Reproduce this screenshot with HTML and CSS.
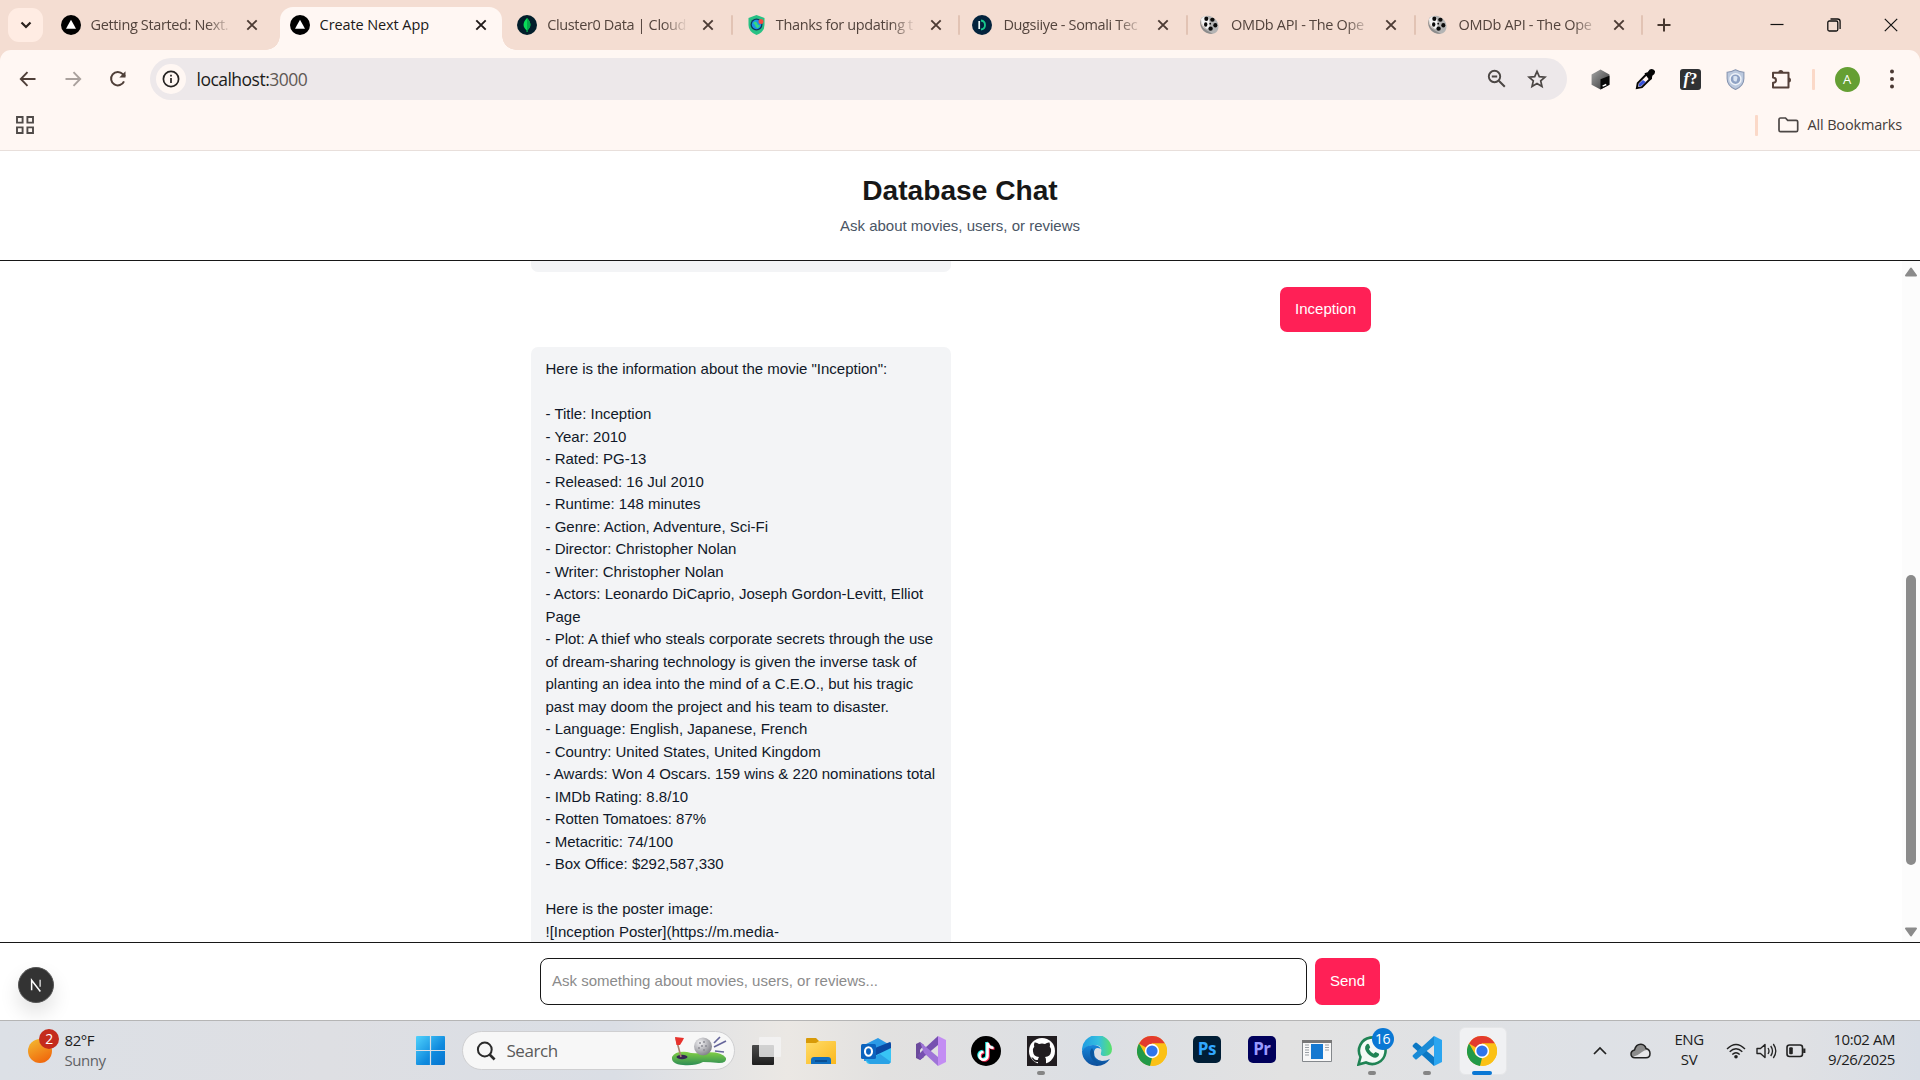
FILE: index.html
```html
<!DOCTYPE html>
<html lang="en">
<head>
<meta charset="utf-8">
<title>Create Next App</title>
<link rel="stylesheet" href="styles.css">
</head>
<body>
<svg class="sprite" aria-hidden="true">
  <defs>
    <linearGradient id="gCube" x1="0" y1="0" x2="1" y2="1"><stop offset="0" stop-color="#a5a5a5"/><stop offset=".7" stop-color="#555"/></linearGradient>
    <linearGradient id="gSun" x1="0.2" y1="0" x2="0.7" y2="1"><stop offset="0" stop-color="#f3b62f"/><stop offset="1" stop-color="#f0650b"/></linearGradient>
    <linearGradient id="gWin" gradientUnits="userSpaceOnUse" x1="0" y1="0" x2="29" y2="29"><stop offset="0" stop-color="#50d2fc"/><stop offset=".6" stop-color="#0f8ade"/><stop offset="1" stop-color="#0573cf"/></linearGradient>
    <linearGradient id="gFolder" x1="0" y1="0" x2="1" y2="1"><stop offset="0" stop-color="#ffdc69"/><stop offset="1" stop-color="#fbb81d"/></linearGradient>
    <linearGradient id="gEdge" x1="0" y1="0" x2="1" y2="0"><stop offset="0" stop-color="#1f9be2"/><stop offset=".55" stop-color="#35bfdf"/><stop offset="1" stop-color="#5be267"/></linearGradient>
    <linearGradient id="gEdgeLow" x1="0" y1="0" x2="0" y2="1"><stop offset="0" stop-color="#1788dc"/><stop offset="1" stop-color="#0d4e9b"/></linearGradient>
    <linearGradient id="gGrass" x1="0" y1="0" x2="0" y2="1"><stop offset="0" stop-color="#83cf45"/><stop offset="1" stop-color="#2d8d55"/></linearGradient>
    <linearGradient id="gDark" x1="0" y1="0" x2="0" y2="1"><stop offset="0" stop-color="#4b4b4b"/><stop offset="1" stop-color="#1e1e1e"/></linearGradient>
    <radialGradient id="gBall" cx=".35" cy=".3" r=".8"><stop offset="0" stop-color="#f2f2f4"/><stop offset="1" stop-color="#77777f"/></radialGradient>
  </defs>
  <symbol id="x" viewBox="0 0 20 20"><path d="M5.3 5.3l9.4 9.4M14.7 5.3l-9.4 9.4" stroke="currentColor" stroke-width="1.9" fill="none"/></symbol>
  <symbol id="vercel" viewBox="0 0 20 20"><circle cx="10" cy="10" r="10" fill="#000"/><path d="M10 4.8l5 9H5z" fill="#fff"/></symbol>
  <symbol id="reel" viewBox="0 0 20 20"><path d="M1 3Q5 0 10 1q8 3 8.500 10 0 6-4.500 7.500-5 1-9-5Q0 8 1 3z" fill="#b4b4b4"/><path d="M.5 4Q0 11 7 15.500l6 3.500q-8 0-11-5Q-1 9 .5 4z" fill="#8c8c8c"/><path d="M1 4q2-3 6-3 4 6 2 12l-2 1Q1 10 1 4z" fill="#f2f2f2"/><g fill="#0b0b0b"><ellipse cx="6.300" cy="3.800" rx="2" ry="2.200"/><ellipse cx="12.400" cy="4.800" rx="2.200" ry="2"/><ellipse cx="5.700" cy="9.500" rx="1.700" ry="2.300"/><ellipse cx="15.300" cy="10.300" rx="2" ry="2.200"/><ellipse cx="10.600" cy="13.700" rx="2.200" ry="2.100"/><circle cx="10.200" cy="8.700" r=".9"/></g></symbol>
  <symbol id="chrome" viewBox="0 0 30 30"><circle cx="15" cy="15" r="15" fill="#fbc116"/><path d="M15 15L2 7.5A15 15 0 0 1 28 7.5H15z" fill="#e33b2e"/><path d="M2 7.5l6.5 11.300L15 22l-2 8A15 15 0 0 1 2 7.500z" fill="#229a48"/><path d="M28 7.500H15l6.500 11.300L15 30A15 15 0 0 0 28 7.500z" fill="#fbc116"/><circle cx="15" cy="15" r="7.200" fill="#fff"/><circle cx="15" cy="15" r="5.600" fill="#2f75ea"/></symbol>
</svg>

<div class="browser">
  <div class="tabstrip">
    <button class="tab-search"><svg width="12" height="8" viewBox="0 0 12 8"><path d="M1.500 1.500L6 6l4.500-4.500" fill="none" stroke="#2a211d" stroke-width="2.200"/></svg></button>
    <div class="tabs">
      <div class="tab"><svg class="fav"><use href="#vercel"/></svg><span class="name">Getting Started: Next.</span><svg class="close"><use href="#x"/></svg></div>
      <div class="tab active"><svg class="fav"><use href="#vercel"/></svg><span class="name">Create Next App</span><svg class="close"><use href="#x"/></svg></div>
      <div class="tab sep"><svg class="fav" viewBox="0 0 20 20"><circle cx="10" cy="10" r="10" fill="#021e2b"/><path d="M10 3c4.500 4.500 4.500 9 .4 12.300V17h-.8v-1.700C5.500 12 5.500 7.500 10 3z" fill="#09dd59"/><path d="M10 3v14h.5v-1.700C14.500 12 14.500 7.500 10 3z" fill="#07a94b"/></svg><span class="name">Cluster0 Data | Cloud</span><svg class="close"><use href="#x"/></svg></div>
      <div class="tab sep"><svg class="fav" viewBox="0 0 20 20"><path d="M11.500 0l8 3v7q0 7-8 10-8-3-8-10V3z" fill="#27c184"/><circle cx="11.500" cy="9.500" r="6" fill="#0b385e"/><circle cx="11.500" cy="9.500" r="4.700" fill="#1d91ea"/><path d="M8 8q3-3 4 0t3 2q-1 4-3 3t-2-3z" fill="#35d981"/><circle cx="16" cy="6.500" r="2.500" fill="#f24d42"/></svg><span class="name shift">Thanks for updating t</span><svg class="close"><use href="#x"/></svg></div>
      <div class="tab sep"><svg class="fav" viewBox="0 0 20 20"><circle cx="10" cy="10" r="10" fill="#03233d"/><path d="M7.200 6v8" stroke="#e8f6f5" stroke-width="1.700"/><path d="M9 5.500q4 .5 4 4.500t-4 4.500" fill="none" stroke="#18c98c" stroke-width="1.800"/></svg><span class="name shift">Dugsiiye - Somali Tec</span><svg class="close"><use href="#x"/></svg></div>
      <div class="tab sep"><svg class="fav"><use href="#reel"/></svg><span class="name shift tight">OMDb API - The Ope</span><svg class="close"><use href="#x"/></svg></div>
      <div class="tab sep"><svg class="fav"><use href="#reel"/></svg><span class="name shift tight">OMDb API - The Ope</span><svg class="close"><use href="#x"/></svg></div>
    </div>
    <button class="newtab"><svg width="14" height="14" viewBox="0 0 14 14"><path d="M7 .5v13M.5 7h13" stroke="#47372f" stroke-width="2"/></svg></button>
    <div class="winctl">
      <button><svg width="14" height="14" viewBox="0 0 14 14"><path d="M.5 6.500h13" stroke="#111" stroke-width="1.200"/></svg></button>
      <button><svg width="14" height="14" viewBox="0 0 14 14"><rect x=".8" y="3" width="10" height="10" rx="1.500" fill="none" stroke="#111" stroke-width="1.300"/><path d="M3.500 1h7q2.600 0 2.600 2.600V11" fill="none" stroke="#111" stroke-width="1.300"/></svg></button>
      <button><svg width="14" height="14" viewBox="0 0 14 14"><path d="M.8.8l12.400 12.400M13.200.8L.8 13.200" stroke="#111" stroke-width="1.200"/></svg></button>
    </div>
  </div>

  <div class="panel">
    <div class="toolbar">
      <div class="nav">
        <svg viewBox="0 0 20 20"><path d="M17.500 10H3M9.500 3.200L2.800 10l6.700 6.800" fill="none" stroke="#4f3f38" stroke-width="1.900"/></svg>
        <svg viewBox="0 0 20 20"><path d="M2.500 10H17M10.500 3.200l6.700 6.800-6.700 6.800" fill="none" stroke="#aaa19d" stroke-width="1.900"/></svg>
        <svg viewBox="0 0 20 20"><path d="M16 12.300A6.700 6.700 0 1 1 14.800 5.200L17 7.500" fill="none" stroke="#4f3f38" stroke-width="2"/><path d="M17.500 2.300v6.200h-6.200z" fill="#4f3f38"/></svg>
      </div>
      <div class="omnibox">
        <span class="info"><svg width="18" height="18" viewBox="0 0 18 18"><circle cx="9" cy="9" r="7.600" fill="none" stroke="#262322" stroke-width="1.700"/><path d="M9 8v5M9 4.700v1.800" stroke="#262322" stroke-width="1.700"/></svg></span>
        <span class="url">localhost:<i>3000</i></span>
        <svg class="oi zoomi" viewBox="0 0 20 20"><circle cx="7.500" cy="7.500" r="5.700" fill="none" stroke="#4c4745" stroke-width="1.900"/><path d="M4.800 7.500h5.400M11.800 11.800l6 6" stroke="#4c4745" stroke-width="2"/></svg>
        <svg class="oi" viewBox="0 0 20 20"><path d="M10 2.300l2.300 5.300 5.700.5-4.300 3.800 1.300 5.600-5-3-5 3 1.300-5.600L2 8.100l5.700-.5z" fill="none" stroke="#4c4745" stroke-width="1.700"/></svg>
      </div>
      <div class="exts">
        <svg viewBox="0 0 20 20"><path d="M10 .5l8.500 4.700v9.700L10 19.500l-8.500-4.600V5.200z" fill="url(#gCube)"/><path d="M10 9.800l8.500-3.300v8.400L10 19.500z" fill="#080808"/><path d="M12 16.300l3.500-1.500" stroke="#fff" stroke-width="1.400"/></svg>
        <svg viewBox="0 0 20 20"><path d="M1.800 18.200l.8-4.700 8.300-8.500 4 4-8.300 8.300z" fill="#fff3f0" stroke="#050505" stroke-width="1.900"/><path d="M3.400 16.700l.6-3L7.500 10.500l2.800 1.800-4.500 4z" fill="#3750d8"/><path d="M9 4l3-1 2-2.500q3-1.500 5 1.500.5 3-2.500 4.500l-.5 3-2 1.500z" fill="#050505"/></svg>
        <span class="fq"><i>f</i>?</span>
        <svg viewBox="0 0 20 20"><path d="M10 .7Q14 3 18 3v6q0 7-8 10.500Q2 16 2 9V3q4 0 8-2.300z" fill="#bcc9de" stroke="#8795b0"/><circle cx="10" cy="9.700" r="5.200" fill="#8fa2c4" stroke="#eef2f8" stroke-width="1.400"/><path d="M8 7q3-1 4 1l-1 4q-3 0-3-2z" fill="#dbe5f2"/></svg>
        <svg class="puzzle" viewBox="0 0 22 22"><path d="M3 4.800h15.500V19.500H3v-4.700q3-.2 3-2.600T3 9.500z" fill="none" stroke="#55413a" stroke-width="2" stroke-linejoin="round"/><path d="M8.300 4.500a2.500 2.500 0 0 1 5 0zM18.500 9.500a2.500 2.500 0 0 1 0 5z" fill="#55413a"/></svg>
        <span class="vbar"></span>
        <span class="avatar">A</span>
        <svg class="dots" viewBox="0 0 20 20"><g fill="#4a3933"><circle cx="10" cy="2.600" r="2"/><circle cx="10" cy="10" r="2"/><circle cx="10" cy="17.400" r="2"/></g></svg>
      </div>
    </div>
    <div class="bookmarks">
      <svg width="18" height="18" viewBox="0 0 18 18"><path d="M1 1h5.600v5.600H1zM11.400 1H17v5.600h-5.600zM1 11.400h5.600V17H1zM11.400 11.400H17V17h-5.600z" fill="none" stroke="#504b49" stroke-width="1.900"/></svg>
      <div class="allbm"><span class="vbar"></span><svg width="21" height="16" viewBox="0 0 21 16"><path d="M1 13V2.500Q1 1 2.500 1h5l2.200 2.300h8.500q1.500 0 1.500 1.500V13q0 1.700-1.500 1.700H2.500Q1 14.700 1 13z" fill="none" stroke="#4c4745" stroke-width="1.700"/></svg><span>All Bookmarks</span></div>
    </div>
  </div>
</div>

<div class="app">
  <header class="head"><h1>Database Chat</h1><p>Ask about movies, users, or reviews</p></header>
  <main class="scroll">
    <div class="messages">
      <div class="bubble bot tail"></div>
      <div class="bubble user">Inception</div>
      <div class="bubble bot">Here is the information about the movie "Inception":

- Title: Inception
- Year: 2010
- Rated: PG-13
- Released: 16 Jul 2010
- Runtime: 148 minutes
- Genre: Action, Adventure, Sci-Fi
- Director: Christopher Nolan
- Writer: Christopher Nolan
- Actors: Leonardo DiCaprio, Joseph Gordon-Levitt, Elliot Page
- Plot: A thief who steals corporate secrets through the use of dream-sharing technology is given the inverse task of planting an idea into the mind of a C.E.O., but his tragic past may doom the project and his team to disaster.
- Language: English, Japanese, French
- Country: United States, United Kingdom
- Awards: Won 4 Oscars. 159 wins &amp; 220 nominations total
- IMDb Rating: 8.8/10
- Rotten Tomatoes: 87%
- Metacritic: 74/100
- Box Office: $292,587,330

Here is the poster image:
![Inception Poster](https://m.media-</div>
    </div>
    <div class="scrollbar">
      <svg width="14" height="10" viewBox="0 0 14 10"><path d="M7 1.500L12 8.500H2z" fill="#8b8b8b" stroke="#8b8b8b" stroke-width="2" stroke-linejoin="round"/></svg>
      <span class="thumb"></span>
      <svg width="14" height="10" viewBox="0 0 14 10"><path d="M7 8.500L12 1.500H2z" fill="#8b8b8b" stroke="#8b8b8b" stroke-width="2" stroke-linejoin="round"/></svg>
    </div>
  </main>
  <footer class="composer">
    <span class="devtools"><svg width="14" height="14" viewBox="0 0 16 16"><path d="M3 14V2.500L13 15.500" fill="none" stroke="#fff" stroke-width="1.700"/><path d="M12.700 2v8" stroke="#ddd" stroke-width="1.600"/></svg></span>
    <div class="field">Ask something about movies, users, or reviews...</div>
    <button class="send">Send</button>
  </footer>
</div>

<div class="taskbar">
  <div class="weather">
    <span class="sun"><svg width="24" height="24"><circle cx="12" cy="12" r="12" fill="url(#gSun)"/></svg><b>2</b></span>
    <div class="temp"><div>82°F</div><div class="dim">Sunny</div></div>
  </div>
  <svg class="start" viewBox="0 0 29 29"><path d="M1 0h12.900v13.900H0V1q0-1 1-1zM15.100 0H28q1 0 1 1v12.900H15.100zM0 15.100h13.900V29H1q-1 0-1-1zM15.100 15.100H29V28q0 1-1 1H15.100z" fill="url(#gWin)"/></svg>
  <div class="search">
    <svg width="20" height="20" viewBox="0 0 20 20"><circle cx="8.800" cy="8.500" r="6.900" fill="none" stroke="#2b2b2b" stroke-width="2"/><path d="M13.600 13.500l5 5" stroke="#2b2b2b" stroke-width="2.600"/></svg>
    <span>Search</span>
    <svg class="golf" width="56" height="30" viewBox="0 0 56 30"><path d="M1 21q3-6 15-5 6 2 12 1 22-3 27 5 1 5-7 5-9-1-16-1-8 4-20 3Q0 28 1 21z" fill="url(#gGrass)"/><ellipse cx="11" cy="21" rx="5.500" ry="2.200" fill="#352552"/><path d="M5 2l5 19" stroke="#a98470" stroke-width="1.600"/><path d="M4 1l9 1-1.500 3L9 9 5.500 9z" fill="#e8322d"/><circle cx="32" cy="10.500" r="9" fill="url(#gBall)"/><g fill="#8d8d95"><circle cx="29" cy="7" r="1"/><circle cx="33" cy="6" r="1"/><circle cx="31" cy="10" r="1"/><circle cx="35" cy="10" r="1"/><circle cx="28" cy="12" r="1"/><circle cx="33" cy="14" r="1"/></g><path d="M43 7l6-6M43 11l12-6M44 15l9 1" stroke="#66669b" stroke-width="1.700"/></svg>
  </div>
  <div class="apps">
    <span class="app-i"><svg viewBox="0 0 30 30"><rect x="1" y="9" width="22" height="20" rx="1" fill="url(#gDark)"/><rect x="8" y="1" width="22" height="20" rx="1" fill="#f4f4f4" opacity=".8"/></svg></span>
    <span class="app-i"><svg viewBox="0 0 30 30"><path d="M0 3q0-1 1-1h9l3 3h16v8H0z" fill="#d89a07"/><path d="M0 7h10l3-2h16q1 0 1 1v22H0z" fill="url(#gFolder)"/><path d="M5 28v-4q0-3 3-3h14q3 0 3 3v4z" fill="#106ebe"/><path d="M9 25h12" stroke="#083f7c" stroke-width="1.300"/></svg></span>
    <span class="app-i"><svg viewBox="0 0 30 30"><path d="M3 9L17 2l12 7v8L12 25H3z" fill="#2b9ae6"/><path d="M14 12L29 6q1 0 1 2v8L15 23z" fill="#0b4aa4"/><path d="M30 12v12q0 4-4 4H9q-4 0-4-4z" fill="#38c4f5"/><path d="M5 24l14-6 11 8-2 2H9z" fill="#2aa2e6"/><rect x="0" y="8" width="15" height="15" rx="1.500" fill="#0b63be"/><ellipse cx="7.500" cy="15.500" rx="3.500" ry="4.200" fill="none" stroke="#fff" stroke-width="2.100"/></svg></span>
    <span class="app-i"><svg viewBox="0 0 30 30"><path d="M0 8l4-2 4 3-4 5v4l4 3-4 3-4-2z" fill="#6b4a9c"/><path d="M4 24L22 9V0L9 12 2 19z" fill="#7650b0"/><path d="M22 0l8 4v22l-8 4z" fill="#c38df3"/><path d="M4 6L22 21v9L8 17z" fill="#9f74d8"/></svg></span>
    <span class="app-i"><svg viewBox="0 0 30 30"><circle cx="15" cy="15" r="15" fill="#000"/><g fill="none" stroke-width="2.600"><path d="M15.500 6v13a4 4 0 1 1-4-4M15.500 6q1 5 6 5" stroke="#25f4ee"/><path d="M17.500 7.500v13a4 4 0 1 1-4-4M17.500 7.500q1 5 6 5" stroke="#fe2c55"/><path d="M16.500 6.700v13a4 4 0 1 1-4-4M16.500 6.700q1 5 6 5" stroke="#fff"/></g></svg></span>
    <span class="app-i run"><svg viewBox="0 0 30 30"><path d="M0 0h30v30H0z" fill="#211d20"/><circle cx="15" cy="15" r="13" fill="#fff"/><path d="M7.500 6.500q2-.5 4.500 1.500 3-.8 6 0 2.500-2 4.500-1.500.8 2 .2 4 1.800 2 1.300 5-.5 5-6 5.500 1 1 1 3v4.500h-8V26q-4 .5-5.500-3l-1.200-1.400q2-.3 2.700 1.400 1.500 1.500 4 .7.1-1.700 1-2.700-5.500-.5-6-5.500-.5-3 1.300-5-.6-2 .2-4z" fill="#211d20"/></svg></span>
    <span class="app-i"><svg viewBox="0 0 30 30"><path d="M0 15A15 15 0 0 1 30 13q0 7-7 7-5 0-4-3 2-8-7-8Q4 9 0 15z" fill="url(#gEdge)"/><path d="M0 15q3-6 11-6 6 0 8 4-6-3-7 3 0 8 8 9 4 0 8-2-5 7-13 7A15 15 0 0 1 0 15z" fill="url(#gEdgeLow)"/><path d="M10 12q-4 5 0 11 5 7 12 4-12-1-10-11z" fill="#0b579f"/></svg></span>
    <span class="app-i"><svg><use href="#chrome"/></svg></span>
    <span class="app-i"><span class="adobe ps">Ps</span></span>
    <span class="app-i"><span class="adobe pr">Pr</span></span>
    <span class="app-i"><svg viewBox="0 0 30 30"><path d="M.5 4.500h29v21H.5z" fill="#f8f8f8" stroke="#84888c"/><path d="M0 4h30v3H0z" fill="#777"/><rect x="9" y="8" width="12" height="15" fill="#1679d0"/><path d="M3 9h4M3 11.500h4M3 14h4M3 16.500h4M3 19h4M23 9h4M23 11.500h4M23 14h4" stroke="#9aa0a5"/></svg></span>
    <span class="app-i run"><svg viewBox="0 0 30 30"><path d="M1.500 28.500l2-7.500A13.300 13.300 0 1 1 9 26.500z" fill="#f4faf6" stroke="#1f8354" stroke-width="2.600"/><path d="M9.500 8.500q1.500-1.500 2.500 0l1.200 2.800-1.300 2q1.600 3 4.600 4.400l2-1.700 3.200 1.600q1 .7-.2 2.500-2.500 3-7 .4-5-3-6.400-7.500-.4-3 1.400-4.500z" fill="#1f8354"/></svg><b>16</b></span>
    <span class="app-i run"><svg viewBox="0 0 30 30"><path d="M5 7L22 21v9L1 11q-1-1 0-2l2-2q1-1 2 0z" fill="#0b78c4"/><path d="M22 9L5 23q-1 1-2 0l-2-2q-1-1 0-2L22 0z" fill="#1a8bd6"/><path d="M22 0l8 4v22l-8 4z" fill="#2aa5f0"/></svg></span>
    <span class="app-i current"><svg><use href="#chrome"/></svg></span>
  </div>
  <div class="tray">
    <svg class="chev" width="14" height="9" viewBox="0 0 14 9"><path d="M1 8l6-6 6 6" fill="none" stroke="#222" stroke-width="1.700"/></svg>
    <svg class="cloud" width="21" height="16" viewBox="0 0 21 16"><path d="M5 14.800Q1 14.500 1 11q0-3 3.500-4Q6 1 11 1.200q4 .3 5 4.300 4 1 4 5 0 4.300-4 4.300z" fill="#8c8c8c"/><path d="M3 13.500Q7 13 12 9q4-3 6.500-1.500Q20 9 20 11q-.5 3.800-4 3.800H5z" fill="#e6e6e8"/><path d="M5 14.800Q1 14.500 1 11q0-3 3.500-4Q6 1 11 1.200q4 .3 5 4.300 4 1 4 5 0 4.300-4 4.300z" fill="none" stroke="#222" stroke-width="1.500"/></svg>
    <div class="lang">ENG<br>SV</div>
    <svg class="wifi" width="20" height="16" viewBox="0 0 20 16"><g fill="none" stroke="#222" stroke-width="1.400"><path d="M1 6Q10-3 19 6M3.700 8.800q6.300-6 12.600 0M6.300 11.500q3.700-3.600 7.400 0"/></g><circle cx="10" cy="13.800" r="1.800" fill="#222"/></svg>
    <svg class="vol" width="21" height="18" viewBox="0 0 21 18"><path d="M1 6.500h3.500L9 2.500v13l-4.500-4H1z" fill="none" stroke="#222" stroke-width="1.400" stroke-linejoin="round"/><path d="M12 6q2 3 0 6M14.700 4q3.600 5 0 10M17.300 2q5 7 0 14" fill="none" stroke="#222" stroke-width="1.300"/></svg>
    <svg class="bat" width="20" height="14" viewBox="0 0 20 14"><rect x="1" y="1" width="15.500" height="11.500" rx="2.500" fill="none" stroke="#222" stroke-width="1.600"/><rect x="3.200" y="3.200" width="3.600" height="7" rx="1" fill="#222"/><path d="M18.300 4.500v4.500" stroke="#222" stroke-width="2.200"/></svg>
    <div class="clock">10:02 AM<br>9/26/2025</div>
  </div>
</div>
</body>
</html>
```
FILE: styles.css
```css
* { box-sizing: border-box; }
body { margin: 0; width: 1920px; height: 1080px; overflow: hidden; display: flex; flex-direction: column; background: #fff; font-family: "Liberation Sans", Arial, sans-serif; }
button { border: 0; padding: 0; background: none; font: inherit; display: flex; align-items: center; justify-content: center; }
svg { display: block; flex: none; }
.sprite { position: absolute; width: 0; height: 0; }

/* browser chrome */
.browser { background: #f4ddd2; height: 151px; flex: none; font-family: "Open Sans", "Noto Sans", sans-serif; color: #53443d; }
.tabstrip { height: 50px; display: flex; align-items: stretch; padding-left: 8px; }
.tab-search { width: 35px; height: 34px; margin: 8px 9px 0 0; border-radius: 11px; background: #ffece3; }
.tabs { display: flex; }
.tab { position: relative; width: 227.600px; display: flex; align-items: center; padding-left: 8.500px; }
.tab.sep, .tab.active { padding-left: 10px; }
.fav { width: 20px; height: 20px; margin-right: 10px; }
.name { width: 141px; overflow: hidden; white-space: nowrap; font-size: 14.500px; letter-spacing: -.36px; line-height: 24px; -webkit-mask-image: linear-gradient(to right, #000 82%, transparent); mask-image: linear-gradient(to right, #000 82%, transparent); }
.shift { padding-left: 1px; }
.tight { letter-spacing: -.32px; }
.close { width: 20px; height: 20px; margin-left: 10px; color: #4c3b34; }
.tab.active { background: #fff7f3; width: 222px; margin: 7px 5.600px 0 0; padding-bottom: 7px; border-radius: 13px 13px 0 0; color: #201a18; }
.tab.active .name { mask-image: none; -webkit-mask-image: none; letter-spacing: -.1px; }
.tab.active .close { color: #201a18; }
.tab.active::before, .tab.active::after { content: ""; position: absolute; bottom: 0; width: 14px; height: 14px; }
.tab.active::before { left: -14px; background: radial-gradient(circle at 0 0, transparent 13.500px, #fff7f3 14px); }
.tab.active::after { right: -14px; background: radial-gradient(circle at 100% 0, transparent 13.500px, #fff7f3 14px); }
.tab.sep::after { content: ""; position: absolute; right: 2px; top: 15px; width: 2px; height: 20px; background: #e2c3b4; border-radius: 1px; }
.newtab { width: 20px; margin-left: 9px; }
.winctl { display: flex; margin: 0 1px 0 auto; }
.winctl button { width: 57px; padding-bottom: 1px; }
.panel { height: 101px; background: #fff7f3; border-radius: 11px 11px 0 0; border-bottom: 1px solid #e8dfdb; }
.toolbar { height: 58px; display: flex; align-items: center; }
.nav { display: flex; width: 150px; padding-left: 18px; gap: 25px; }
.nav svg { width: 20px; height: 20px; }
.omnibox { width: 1417px; height: 42px; border-radius: 21px; background: #ede8ea; display: flex; align-items: center; padding-left: 6px; }
.info { width: 30px; height: 30px; border-radius: 50%; background: #fff7f3; display: flex; align-items: center; justify-content: center; }
.url { margin: 0 auto 0 10.500px; font-size: 17.500px; letter-spacing: -.52px; color: #201c1b; }
.url i { font-style: normal; color: #5f5855; }
.oi { width: 20px; height: 20px; margin-right: 20px; }
.exts { display: flex; align-items: center; padding-left: 23px; }
.exts > svg, .fq { width: 21px; height: 21px; margin-right: 24px; }
.fq { border-radius: 3px; background: #303234; color: #fff; font: bold 17px/20px "Liberation Serif", serif; text-align: center; }
.exts .puzzle { width: 22px; height: 22px; margin-right: 20px; }
.vbar { width: 2.500px; height: 21px; border-radius: 1px; background: #fbd9c8; }
.avatar { width: 25px; height: 25px; border-radius: 50%; background: #659f33; color: #fff; font-size: 13px; line-height: 25px; text-align: center; margin: 0 22px 0 20px; }
.exts .dots { width: 20px; height: 20px; margin: 0; }
.bookmarks { display: flex; align-items: center; justify-content: space-between; height: 34px; padding: 0 18px 0 15.500px; }
.allbm { display: flex; align-items: center; font-size: 14.500px; line-height: 20px; letter-spacing: -.17px; color: #453d3a; }
.allbm span:last-child { padding-bottom: 1px; }
.allbm svg { margin: 0 9px 0 20px; }

/* chat application */
.app { height: 869px; display: flex; flex-direction: column; font-size: 15px; line-height: 22.500px; }
.head { flex: none; height: 110px; border-bottom: 1px solid #171717; text-align: center; padding-top: 22px; }
.head h1 { margin: 0; font-size: 28.130px; line-height: 36px; color: #171717; }
.head p { margin: 6px 0 0; color: #4a5565; }
.scroll { height: 681px; overflow: hidden; display: flex; }
.messages { width: 840px; margin-left: 531px; display: flex; flex-direction: column; gap: 15px; align-items: flex-start; }
.bubble { flex: none; padding: 11.250px 15px; border-radius: 7px; }
.bot { width: 420px; background: #f3f4f6; color: #101828; white-space: pre-wrap; padding: 11.250px 14.500px; }
.tail { height: 11px; padding: 0; border-radius: 0 0 7px 7px; }
.user { align-self: flex-end; background: #ff2056; color: #fff; }
.scrollbar { width: 18px; margin-left: auto; padding: 6px 0 5px; background: #fcfcfc; display: flex; flex-direction: column; align-items: center; justify-content: space-between; }
.thumb { width: 10px; height: 290px; border-radius: 5px; background: #8b8b8b; margin-top: 235px; }
.composer { border-top: 1px solid #171717; height: 78px; display: flex; align-items: center; padding: 0 0 1px 18px; }
.devtools { width: 36px; height: 36px; margin: 8px 486px 0 0; border-radius: 50%; background: #333; border: 1px solid #555; box-shadow: 0 10px 20px rgba(0,0,0,.12); display: flex; align-items: center; justify-content: center; }
.field { width: 767px; height: 47px; border: 1px solid #171717; border-radius: 8px; padding: 11px; color: #8b8b8b; }
.send { width: 65px; height: 47px; margin-left: 8px; background: #ff2056; color: #fff; border-radius: 7px; }

/* desktop taskbar */
.taskbar { position: relative; height: 60px; flex: none; border-top: 1px solid #b5b5b5; display: flex; align-items: center; font: 15px/20px "Open Sans", "Noto Sans", sans-serif; letter-spacing: -.45px; color: #1d1d1d; background: linear-gradient(to right, #dce0e6 0, #dedfe3 17%, #dadee5 32%, #ebe8e4 41%, #e2e1e0 46%, #dcdfe4 57%, #e2e2e2 67%, #dee1e6 83%, #e0e1e4 93%, #d8dde5 100%); }
.weather { display: flex; width: 416px; padding-left: 28px; }
.sun { position: relative; width: 24px; margin-right: 12.500px; padding-top: 8px; }
.temp { margin-top: -1px; }
.lang, .clock { padding-bottom: 3px; }
.sun b, .app-i b { position: absolute; border-radius: 50%; color: #fff; font-weight: 400; text-align: center; }
.sun b { left: 11px; top: -2px; width: 20px; height: 20px; font-size: 14px; background: #c42b1c; }
.dim { color: #5f6265; }
.start { width: 29px; height: 29px; }
.search { width: 273px; height: 39px; margin-left: 16.500px; padding: 0 7px 0 13px; border-radius: 20px; border: 1px solid #cfcfd1; background: #f7f7f7; display: flex; align-items: center; color: #5a5a5a; font-size: 17px; }
.search span { margin-left: 11px; }
.golf { margin-left: auto; }
.apps { display: flex; margin-left: 4px; }
.app-i { position: relative; width: 55.100px; height: 58px; display: flex; align-items: center; justify-content: center; }
.app-i > svg { width: 30px; height: 30px; }
.app-i b { left: 27px; top: 6px; width: 22px; height: 22px; line-height: 22px; font-size: 14px; background: #0a78d4; }
.adobe { width: 28px; height: 27px; margin-bottom: 3px; border-radius: 5px; font: bold 17px/25px "Open Sans", sans-serif; letter-spacing: -.5px; text-align: center; }
.ps { background: #001e36; color: #31a8ff; }
.pr { background: #00005b; color: #9999ff; }
.run::after, .current::after { content: ""; position: absolute; bottom: 5px; left: 23.500px; width: 8px; height: 4px; border-radius: 2px; background: #858585; }
.current::before { content: ""; position: absolute; inset: 5px 3px 5px 4px; border-radius: 6px; background: #f0f1f3; border: 1px solid #e5e6e8; }
.current svg { position: relative; }
.current::after { left: 17.500px; width: 20px; background: #0b78d4; }
.tray { display: flex; align-items: center; margin-left: auto; padding-right: 25px; }
.cloud { margin-left: 23px; }
.lang { width: 40px; margin-left: 18px; text-align: center; }
.wifi { margin-left: 17px; }
.vol { margin-left: 10px; }
.bat { margin-left: 9px; }
.clock { width: 78px; margin-left: 11px; text-align: right; white-space: nowrap; }
```
